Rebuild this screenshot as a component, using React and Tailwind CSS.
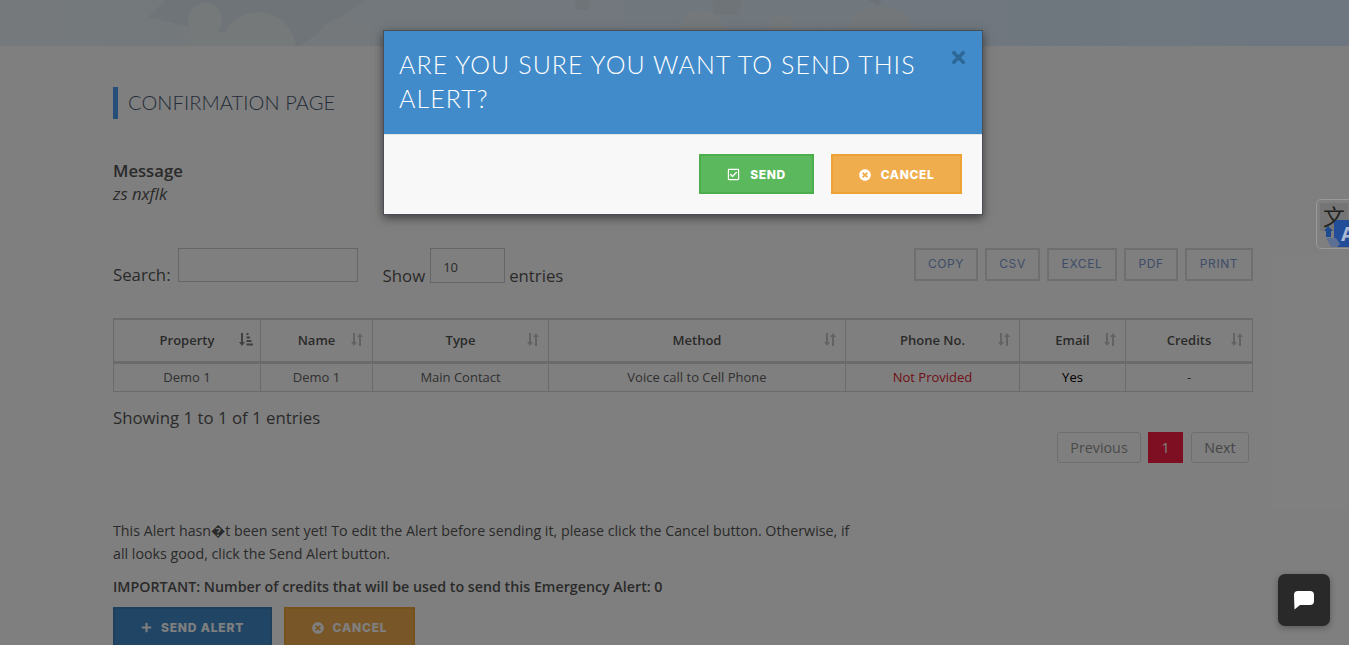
import { X } from "lucide-react";
import { FaPlus, FaTimesCircle, FaRegCheckSquare } from "react-icons/fa";

const columns = [
  { label: "Property", width: "w-[147px]", active: true },
  { label: "Name", width: "w-[112px]" },
  { label: "Type", width: "w-[176px]" },
  { label: "Method", width: "w-[297px]" },
  { label: "Phone No.", width: "w-[174px]" },
  { label: "Email", width: "w-[106px]" },
  { label: "Credits", width: "w-[127px]" },
];

function SortIcon({ active }) {
  return (
    <svg width="14" height="15" viewBox="0 0 14 15" className={active ? "text-[#808080]" : "text-[#c6c6c6]"} fill="currentColor">
      <path d="M2 1h2v9h2l-3 4-3-4h2z" />
      {active ? (
        <path d="M7.500 1h2v2h-2zM7.500 4.500h3.500v2h-3.500zM7.500 8h5v2h-5zM7.500 11.500h6.500v2h-6.500z" />
      ) : (
        <path d="M10 14H8V5H6l3-4 3 4h-2z" />
      )}
    </svg>
  );
}

function ToolButton({ width, children }) {
  return (
    <button className={`${width} h-[33px] border-2 border-[#dedede] pb-[2px] text-[12px] tracking-[0.6px] text-[#7c9ad0] font-['Inter',sans-serif]`}>
      {children}
    </button>
  );
}

export default function App() {
  return (
    <div className="relative h-screen overflow-hidden bg-white font-['Open_Sans',sans-serif] text-[#555]">
      {/* bandeau avec nuages */}
      <div className="h-[46px] overflow-hidden bg-gradient-to-r from-[#eaf2f6] to-[#dceeff]">
        <svg width="1349" height="46" viewBox="0 0 1349 46">
          <path d="M148 17 L166 0 H365 L345 15 L300 46 H215 L215 33 Z" fill="#dfe9f2" />
          <circle cx="205" cy="20" r="17" fill="#ecf2f5" />
          <circle cx="258" cy="50" r="38" fill="#ecf2f5" />
          <rect x="190" y="32" width="60" height="14" fill="#ecf2f5" />
          <circle cx="345" cy="48" r="30" fill="#ebf1f4" />
          <path d="M575 0h15l-2 10h-12z" fill="#dfe8f0" />
          <path d="M712 0h30l-3 15h-25z" fill="#dfe8f0" />
          <circle cx="702" cy="34" r="24" fill="#ebf1f4" />
          <circle cx="782" cy="28" r="12" fill="#ebf1f4" />
          <circle cx="880" cy="42" r="36" fill="#e7eff4" />
          <path d="M868 0h14l-4 6z" fill="#d8e5f0" />
        </svg>
      </div>

      <main className="mx-[113px] w-[1140px]">
        <div className="mt-[41px] flex h-[32px] items-center border-l-[5px] border-[#4a9ff0] pl-[10px]">
          <h1 className="-mt-[2px] font-['Lato',sans-serif] text-[20px] font-light tracking-[0.1px] text-[#465870]">CONFIRMATION PAGE</h1>
        </div>

        <div className="mt-[40px] text-[16.700px] leading-[23px]">
          <p className="font-semibold">Message</p>
          <p className="italic">zs nxflk</p>
        </div>

        <div className="mt-[43px] flex h-[36px] items-start justify-between">
          <div className="flex items-start text-[16.800px]">
            <label className="mt-[16px] leading-[22px]">Search:</label>
            <input className="ml-[7px] h-[34px] w-[180px] border border-[#cdcdcd]" />
            <span className="ml-[25px] mt-[17px] leading-[22px]">Show</span>
            <div className="ml-[5px] h-[35px] w-[75px] border border-[#cdcdcd] pl-[12px] pt-[10px] text-[13px] leading-[16px]">10</div>
            <span className="ml-[4px] mt-[17px] leading-[22px]">entries</span>
          </div>
          <div className="flex gap-[7px]">
            <ToolButton width="w-[64px]">COPY</ToolButton>
            <ToolButton width="w-[55px]">CSV</ToolButton>
            <ToolButton width="w-[70px]">EXCEL</ToolButton>
            <ToolButton width="w-[54px]">PDF</ToolButton>
            <ToolButton width="w-[68px]">PRINT</ToolButton>
          </div>
        </div>

        <table className="mt-[34px] w-[1139px] table-fixed border-collapse text-center text-[13px]">
          <thead>
            <tr className="h-[43px] border-t-2 border-b-[3px] border-[#d6d6d6]">
              {columns.map((c) => (
                <th key={c.label} className={`${c.width} relative border-x border-[#d6d6d6] font-semibold text-[#555]`}>
                  {c.label}
                  <span className="absolute right-[7px] top-[12px]">
                    <SortIcon active={c.active} />
                  </span>
                </th>
              ))}
            </tr>
          </thead>
          <tbody>
            <tr className="h-[29px] border-b border-[#d6d6d6]">
              <td className="border-x border-[#d6d6d6] pt-[2px] text-[#626262]">Demo 1</td>
              <td className="border-x border-[#d6d6d6] pt-[2px] text-[#626262]">Demo 1</td>
              <td className="border-x border-[#d6d6d6] pt-[2px] text-[#626262]">Main Contact</td>
              <td className="border-x border-[#d6d6d6] pt-[2px] text-[#626262]">Voice call to Cell Phone</td>
              <td className="border-x border-[#d6d6d6] pt-[2px] text-[#e2202c]">Not Provided</td>
              <td className="border-x border-[#d6d6d6] pt-[2px] text-black">Yes</td>
              <td className="border-x border-[#d6d6d6] pt-[2px] text-[#555]">-</td>
            </tr>
          </tbody>
        </table>

        <p className="mt-[15px] text-[16.800px] leading-[22px]">Showing 1 to 1 of 1 entries</p>

        <div className="mt-[3px] flex justify-end gap-[7px] pr-[4px] text-[14.300px]">
          <button className="h-[31px] w-[84px] rounded-[3px] border border-[#ddd] pt-px text-[#949494]">Previous</button>
          <button className="mr-px h-[31px] w-[35px] bg-[#fc1c44] pt-px text-white">1</button>
          <button className="h-[31px] w-[58px] rounded-[3px] border border-[#ddd] pt-px text-[#8c8c8c]">Next</button>
        </div>

        <div className="mt-[56px] w-[745px] text-[14.250px] leading-[23px]">
          <p>This Alert hasn�t been sent yet! To edit the Alert before sending it, please click the Cancel button. Otherwise, if all looks good, click the Send Alert button.</p>
          <p className="mt-[10px] font-semibold">IMPORTANT: Number of credits that will be used to send this Emergency Alert: 0</p>
        </div>

        <div className="mt-[9px] flex gap-[12px] text-[12px] font-extrabold tracking-[0.8px] text-white font-['Inter',sans-serif]">
          <button className="flex h-[42px] w-[159px] items-center justify-center gap-[9px] border-2 border-[#3e80bb] bg-[#428bca]">
            <FaPlus size={11} /> SEND ALERT
          </button>
          <button className="flex h-[42px] w-[131px] items-center justify-center gap-[9px] border-2 border-[#eea236] bg-[#f0ad4e]">
            <FaTimesCircle size={12} /> CANCEL
          </button>
        </div>
      </main>

      {/* voile */}
      <div className="absolute inset-0 bg-black/50" />

      {/* fenêtre de confirmation */}
      <div className="absolute left-[383px] top-[30px] w-[600px] border border-[#4a4f55] shadow-[0_3px_9px_rgba(0,0,0,0.5)]">
        <div className="relative h-[104px] border-b border-[#e5e5e5] bg-[#428bca] px-[15px] pt-[16px]">
          <h2 className="w-[540px] font-['Lato',sans-serif] text-[25px] font-light leading-[34px] tracking-[1.060px] text-white">
            ARE YOU SURE YOU WANT TO SEND THIS ALERT?
          </h2>
          <X size={19} strokeWidth={4.5} className="absolute right-[14px] top-[17px] text-[#2d6798]" />
        </div>
        <div className="flex h-[79px] items-start justify-end gap-[17px] bg-[#f8f8f8] pr-[20px] pt-[19px] text-[12px] font-extrabold tracking-[0.6px] text-white font-['Inter',sans-serif]">
          <button className="flex h-[40px] w-[115px] items-center justify-center gap-[10px] border-2 border-[#4cae4c] bg-[#5cb85c] pt-px">
            <FaRegCheckSquare size={13} /> SEND
          </button>
          <button className="flex h-[40px] w-[131px] items-center justify-center gap-[10px] border-2 border-[#eea236] bg-[#f0ad4e] pt-px">
            <FaTimesCircle size={12} /> CANCEL
          </button>
        </div>
      </div>

      {/* widget traduction */}
      <div className="absolute left-[1316px] top-[199px] h-[50px] w-[50px] overflow-hidden rounded-[5px] border border-[#9a9a9a]">
        <div className="absolute left-[3px] top-[3px] h-[28px] w-[28px] bg-[#757575] text-center font-['Noto_Sans_CJK_SC',sans-serif] text-[22px] leading-[24px] text-[#222]">文</div>
        <div className="absolute left-[17px] top-[20px] h-[27px] w-[30px] rounded-[4px] bg-[#224d98] pl-[7px] text-[20px] font-bold leading-[27px] text-[#aab9d4]">A</div>
        <svg className="absolute left-[6px] top-[26px]" width="20" height="22" viewBox="0 0 20 22">
          <path d="M5 0l5 5H8v6H3V5H1z" fill="#1d4a90" />
          <path d="M3 12h10l4 6-3 3H8z" fill="#5d6f92" />
        </svg>
      </div>

      {/* bouton chat */}
      <button className="absolute left-[1278px] top-[574px] flex h-[52px] w-[52px] items-center justify-center rounded-[7px] bg-[#292929] shadow-[0_2px_6px_rgba(0,0,0,0.3)]">
        <svg width="20" height="19" viewBox="0 0 20 19" fill="white">
          <path d="M4 0h12a4 4 0 0 1 4 4v6a4 4 0 0 1-4 4H6l-5.500 4.500L0 4a4 4 0 0 1 4-4z" />
        </svg>
      </button>
    </div>
  );
}
